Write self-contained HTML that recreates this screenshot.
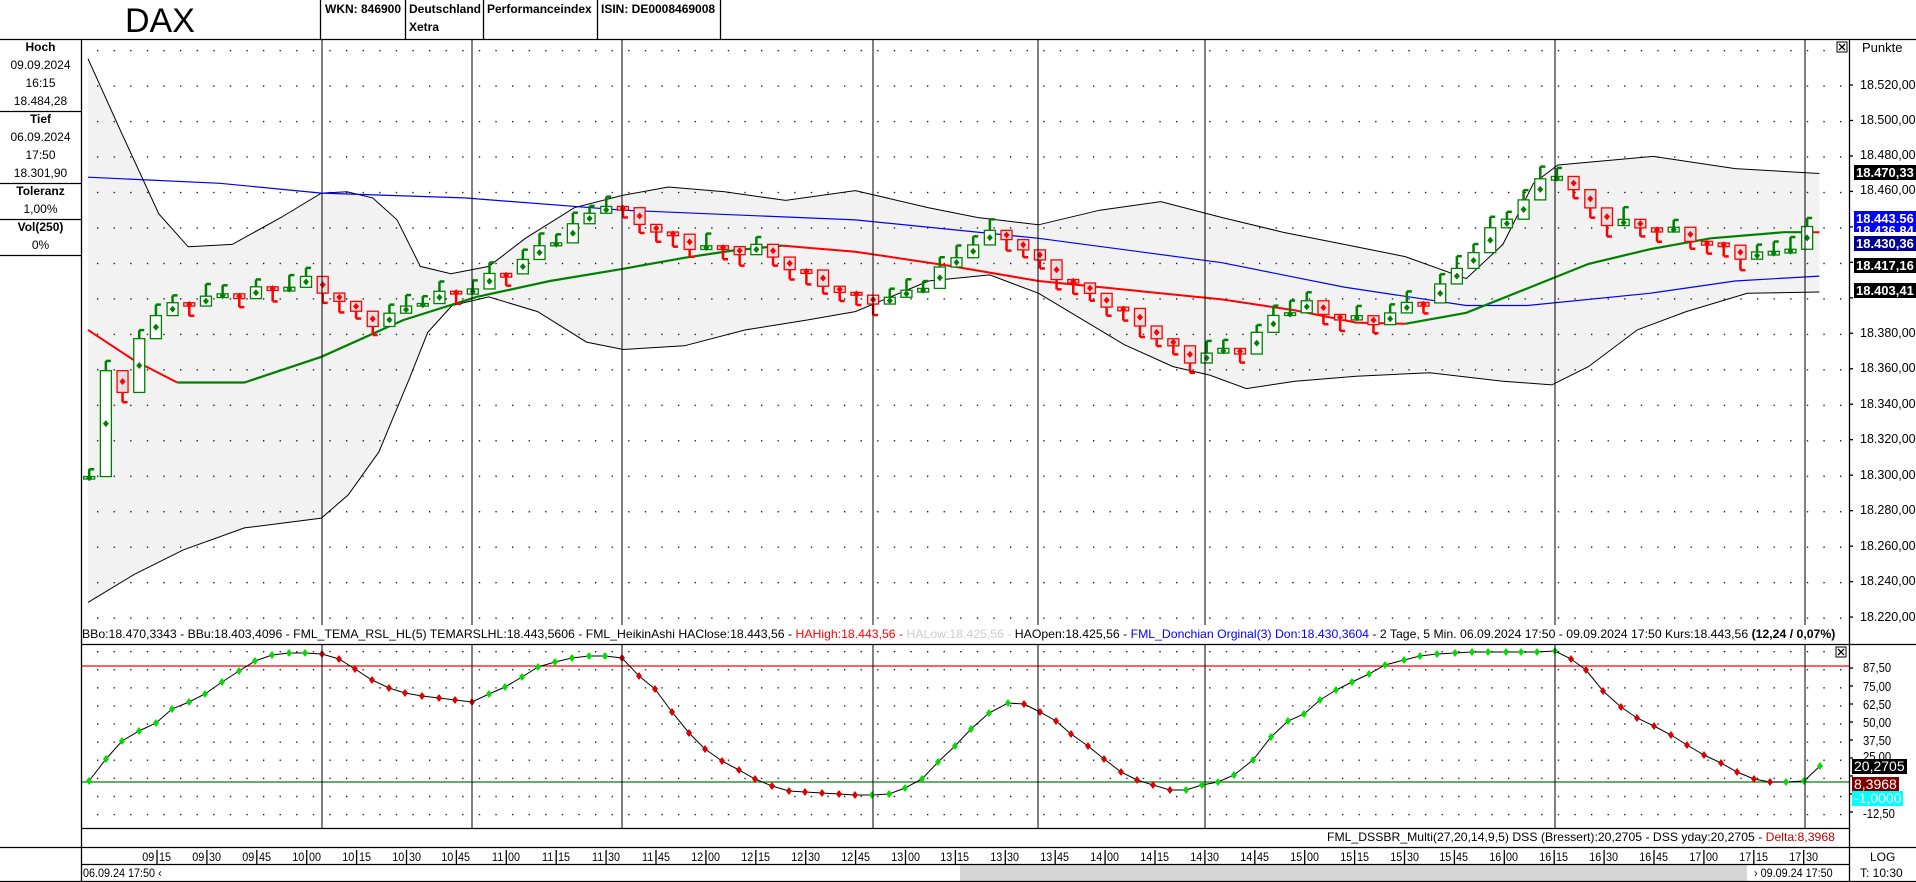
<!DOCTYPE html>
<html><head><meta charset="utf-8"><style>
body{margin:0;width:1916px;height:882px;overflow:hidden;background:#fff;font-family:"Liberation Sans",Arial,sans-serif;position:relative}
.t{position:absolute;white-space:nowrap;font-size:12px;color:#000;line-height:14px}
.c{position:absolute;width:81px;text-align:center;font-size:12px;line-height:14px}
.b{font-weight:bold}
.box{position:absolute;left:1854px;font-size:13px;font-weight:bold;line-height:15px;padding:0 2px;white-space:nowrap}
.ax{position:absolute;left:1860px;font-size:12.5px;line-height:14px}
.ax2{position:absolute;left:1863px;font-size:12.5px;line-height:14px;transform:scaleX(.9);transform-origin:left}
</style></head><body>
<svg id="s" width="1916" height="882" style="position:absolute;left:0;top:0">
<defs>
<pattern id="g1" patternUnits="userSpaceOnUse" x="97" y="14.5" width="16.6" height="35.47"><rect width="1.3" height="1.3" fill="#000"/></pattern>
<pattern id="g2" patternUnits="userSpaceOnUse" x="97" y="651" width="16.6" height="18.1"><rect width="1.3" height="1.3" fill="#000"/></pattern>
</defs>
<g id="main"></g>
</svg>
<div class="t" style="left:125px;top:2px;font-size:34px;line-height:38px">DAX</div>
<div class="t b" style="left:325px;top:2px">WKN: 846900</div>
<div class="t b" style="left:409px;top:2px">Deutschland</div>
<div class="t b" style="left:409px;top:20px">Xetra</div>
<div class="t b" style="left:487px;top:2px">Performanceindex</div>
<div class="t b" style="left:601px;top:2px">ISIN: DE0008469008</div>

<div class="c b" style="left:0;top:40px">Hoch</div>
<div class="c" style="left:0;top:58px">09.09.2024</div>
<div class="c" style="left:0;top:76px">16:15</div>
<div class="c" style="left:0;top:94px">18.484,28</div>
<div class="c b" style="left:0;top:112px">Tief</div>
<div class="c" style="left:0;top:130px">06.09.2024</div>
<div class="c" style="left:0;top:148px">17:50</div>
<div class="c" style="left:0;top:166px">18.301,90</div>
<div class="c b" style="left:0;top:184px">Toleranz</div>
<div class="c" style="left:0;top:202px">1,00%</div>
<div class="c b" style="left:0;top:220px">Vol(250)</div>
<div class="c" style="left:0;top:238px">0%</div>

<div class="t" style="left:1862px;top:41px;font-size:13px">Punkte</div>
<div class="ax" style="top:78px">18.520,00</div>
<div class="ax" style="top:113px">18.500,00</div>
<div class="ax" style="top:148px">18.480,00</div>
<div class="ax" style="top:183px">18.460,00</div>
<div class="ax" style="top:326px">18.380,00</div>
<div class="ax" style="top:361px">18.360,00</div>
<div class="ax" style="top:397px">18.340,00</div>
<div class="ax" style="top:432px">18.320,00</div>
<div class="ax" style="top:468px">18.300,00</div>
<div class="ax" style="top:503px">18.280,00</div>
<div class="ax" style="top:539px">18.260,00</div>
<div class="ax" style="top:574px">18.240,00</div>
<div class="ax" style="top:610px">18.220,00</div>
<div class="box" style="top:165px;background:#000;color:#fff">18.470,33</div>
<div class="box" style="top:211px;background:#0000ff;color:#fff">18.443,56</div>
<div class="box" style="top:223px;background:#0000ff;color:#fff;height:9px;overflow:hidden">18.436,84</div>
<div class="box" style="top:236px;background:#000090;color:#fff">18.430,36</div>
<div class="box" style="top:258px;background:#000;color:#fff">18.417,16</div>
<div class="box" style="top:283px;background:#000;color:#fff">18.403,41</div>

<div class="ax2" style="top:661px">87,50</div>
<div class="ax2" style="top:680px">75,00</div>
<div class="ax2" style="top:698px">62,50</div>
<div class="ax2" style="top:716px">50,00</div>
<div class="ax2" style="top:734px">37,50</div>
<div class="ax2" style="top:750px">25,00</div>
<div class="ax2" style="top:807px">-12,50</div>
<div class="box" style="left:1852px;top:759px;background:#000;color:#fff;font-weight:normal;font-size:14px">20,2705</div>
<div class="box" style="left:1852px;top:777px;background:#800000;color:#fff;font-weight:normal;font-size:14px">8,3968</div>
<div class="box" style="left:1852px;top:791px;background:#00ffff;color:#fff;font-weight:normal;font-size:14px">-1,0000</div>

<div id="leg" class="t" style="left:82px;top:627px;transform-origin:left">BBo:18.470,3343 - BBu:18.403,4096 - FML_TEMA_RSL_HL(5) TEMARSLHL:18.443,5606 - FML_HeikinAshi HAClose:18.443,56 - <span style="color:#f00">HAHigh:18.443,56 - </span><span style="color:#ccc">HALow:18.425,56 - </span>HAOpen:18.425,56 - <span style="color:#00f">FML_Donchian Orginal(3) Don:18.430,3604</span> - 2 Tage, 5 Min. 06.09.2024 17:50 - 09.09.2024 17:50 Kurs:18.443,56 <b>(12,24 / 0,07%)</b></div>
<div id="leg2" class="t" style="left:1327px;top:830px;transform-origin:left">FML_DSSBR_Multi(27,20,14,9,5) DSS (Bressert):20,2705 - DSS yday:20,2705 - <span style="color:#c00000">Delta:8,3968</span></div>
<div id="times"></div>
<div class="t" style="left:83px;top:866px;transform:scaleX(.9);transform-origin:left">06.09.24 17:50 &#8249;</div>
<div class="t" style="left:1754px;top:866px;transform:scaleX(.9);transform-origin:left">&#8250; 09.09.24 17:50</div>
<div class="t" style="left:1870px;top:850px">LOG</div>
<div class="t" style="left:1860px;top:866px">T: 10:30</div>

<script>
(function(){
var NS="http://www.w3.org/2000/svg",G=document.getElementById("main"),S=1.2219;
function el(t,a){var e=document.createElementNS(NS,t);for(var k in a)e.setAttribute(k,a[k]);G.appendChild(e);return e}
function sc(p){return p.map(function(q){return [q[0]*S,q[1]*S]})}
function pl(p){return p.map(function(q){return q[0].toFixed(1)+","+q[1].toFixed(1)}).join(" ")}
function interp(p,x){if(x<=p[0][0])return p[0][1];for(var i=1;i<p.length;i++){if(x<=p[i][0]){var t=(x-p[i-1][0])/(p[i][0]-p[i-1][0]);return p[i-1][1]+t*(p[i][1]-p[i-1][1])}}return p[p.length-1][1]}
el("rect",{x:960,y:865,width:787,height:16,fill:"#d6d6d6"});
var up=sc([[72,48],[100,110],[130,175],[154,202],[190,200],[230,178],[263,158],[284,157],[305,162],[325,180],[344,218],[369,224],[400,218],[430,195],[470,170],[509,160],[547,153],[593,157],[643,164],[700,156],[760,170],[800,178],[850,184],[900,172],[950,165],[1000,178],[1050,190],[1100,200],[1150,210],[1200,228],[1230,200],[1255,150],[1275,135],[1353,128],[1420,138],[1489,142]]);
var lo=sc([[72,493],[110,470],[150,450],[200,432],[240,427],[263,424],[285,405],[310,370],[335,310],[350,272],[370,250],[400,243],[440,255],[480,280],[510,286],[560,283],[610,270],[660,262],[700,255],[760,230],[810,225],[850,240],[880,258],[920,282],[960,300],[990,307],[1020,318],[1060,312],[1110,308],[1170,305],[1230,312],[1270,315],[1300,300],[1340,270],[1380,255],[1430,240],[1489,239]]);
el("polygon",{points:pl(up.concat(lo.slice().reverse())),fill:"#f2f2f2"});
el("rect",{x:82,y:40,width:1767,height:585,fill:"url(#g1)"});
el("rect",{x:82,y:645,width:1767,height:182,fill:"url(#g2)"});
el("polyline",{points:pl(up),fill:"none",stroke:"#000","stroke-width":1});
el("polyline",{points:pl(lo),fill:"none",stroke:"#000","stroke-width":1});
el("polyline",{points:pl(sc([[72,145],[180,150],[263,158],[380,162],[510,172],[700,180],[850,195],[1000,215],[1100,235],[1200,250],[1250,250],[1350,240],[1420,230],[1489,226]])),fill:"none",stroke:"#0000ff","stroke-width":1.2});
el("polyline",{points:pl(sc([[72,270],[110,295],[145,313]])),fill:"none",stroke:"#ff0000","stroke-width":2});
el("polyline",{points:pl(sc([[145,313],[200,313],[263,292],[330,262],[390,243],[450,230],[510,220],[560,211],[600,205],[640,201]])),fill:"none",stroke:"#008000","stroke-width":2.2});
el("polyline",{points:pl(sc([[640,201],[700,206],[780,218],[850,230],[930,238],[1000,245],[1060,254],[1110,264],[1150,265]])),fill:"none",stroke:"#ff0000","stroke-width":2});
el("polyline",{points:pl(sc([[1150,265],[1200,256],[1250,236],[1300,216],[1350,204],[1400,195],[1460,190],[1475,190]])),fill:"none",stroke:"#008000","stroke-width":2.2});
el("polyline",{points:pl(sc([[1475,190],[1489,190]])),fill:"none",stroke:"#ff0000","stroke-width":2});
var kp=[[75,390],[88,290],[102,330],[115,270],[130,255],[160,245],[200,240],[250,230],[270,240],[300,265],[320,258],[345,245],[380,238],[420,218],[470,185],[495,165],[520,180],[560,200],[600,205],[620,203],[650,220],[700,245],[730,245],[760,230],[800,195],[820,190],[850,215],[880,235],[910,250],[940,270],[970,295],[985,290],[1020,285],[1045,255],[1070,250],[1100,262],[1130,262],[1150,250],[1175,240],[1200,210],[1230,180],[1260,150],[1275,140],[1290,160],[1310,180],[1340,185],[1370,190],[1400,200],[1430,210],[1460,205],[1490,180]];
var prev=392;
for(var i=0;i<104;i++){var x=73+i*13.65;var c=interp(kp,x)+Math.sin(i*2.3)*4;var o=prev;prev=c;
var upc=c<o,col=upc?"#008000":"#ff0000";var tp=Math.min(o,c),bt=Math.max(o,c);if(bt-tp<2){bt=tp+3}
var X=x*S,w=11;var hi=tp-6-(i*7%5),lw=bt+6+(i*5%4);
if(upc){el("line",{x1:X,y1:hi*S,x2:X,y2:tp*S,stroke:col,"stroke-width":2.5});el("line",{x1:X,y1:hi*S,x2:X+5,y2:hi*S,stroke:col,"stroke-width":2.5});}
else{el("line",{x1:X,y1:bt*S,x2:X,y2:lw*S,stroke:col,"stroke-width":2.5});el("line",{x1:X,y1:lw*S,x2:X+5,y2:lw*S,stroke:col,"stroke-width":2.5});}
el("rect",{x:X-w/2,y:tp*S,width:w,height:(bt-tp)*S,fill:upc?"#fff":"#e0e0e0",stroke:col,"stroke-width":1.3});
var m=((tp+bt)/2)*S;el("polygon",{points:(X-3)+","+m+" "+X+","+(m-3.5)+" "+(X+3)+","+m+" "+X+","+(m+3.5),fill:col});}
el("line",{x1:82,y1:666,x2:1849,y2:666,stroke:"#ff0000","stroke-width":1.3});
el("line",{x1:82,y1:782,x2:1849,y2:782,stroke:"#008000","stroke-width":1.3});
var os=[[89,781],[106,759],[122,741],[139,731],[156,723],[172,709],[189,702],[205,694],[222,682],[239,671],[255,661],[272,655],[289,653],[305,653],[322,654],[339,659],[355,669],[372,680],[389,688],[405,693],[422,696],[439,698],[455,700],[472,702],[489,694],[505,687],[522,677],[538,667],[555,662],[572,658],[589,656],[605,656],[622,658],[639,676],[655,689],[672,712],[689,733],[705,749],[722,761],[739,770],[755,779],[772,786],[789,791],[805,792],[822,793],[839,794],[855,795],[872,795],[889,794],[905,788],[922,779],[938,762],[955,746],[971,729],[989,713],[1008,703],[1024,704],[1040,712],[1056,721],[1071,734],[1088,746],[1104,759],[1121,772],[1137,780],[1153,785],[1170,790],[1186,790],[1202,785],[1218,782],[1234,775],[1253,760],[1271,737],[1288,721],[1304,714],[1320,700],[1336,690],[1352,682],[1369,674],[1385,665],[1404,660],[1420,656],[1437,654],[1455,653],[1472,652],[1488,652],[1506,652],[1521,652],[1537,652],[1555,651],[1571,659],[1586,670],[1603,691],[1621,707],[1637,718],[1654,726],[1671,735],[1687,745],[1704,755],[1721,763],[1737,772],[1754,779],[1770,782],[1786,782],[1804,781],[1820,766]];
el("polyline",{points:pl(os),fill:"none",stroke:"#000","stroke-width":1});
for(var j=0;j<os.length;j++){var p=os[j],q=os[j-1]||[0,800];var cl=p[1]<=q[1]?"#00dd00":"#dd0000";el("polygon",{points:(p[0]-3)+","+p[1]+" "+p[0]+","+(p[1]-4)+" "+(p[0]+3)+","+p[1]+" "+p[0]+","+(p[1]+4),fill:cl});}
[322,472,622,873,1038,1205,1555,1805].forEach(function(x){el("line",{x1:x,y1:40,x2:x,y2:625,stroke:"#000","stroke-width":1});el("line",{x1:x,y1:644,x2:x,y2:828,stroke:"#000","stroke-width":1});});
function L(a,b,c,d){el("line",{x1:a,y1:b,x2:c,y2:d,stroke:"#000","stroke-width":1.3})}
L(0,39.5,1916,39.5);L(81.5,39,81.5,882);L(1849.5,39,1849.5,882);
[111,183,219,255].forEach(function(y){L(0,y+.5,81,y+.5)});
L(81,644.5,1916,644.5);L(81,828.5,1849,828.5);L(0,847.5,1916,847.5);L(81,864.5,1849,864.5);L(0,881.5,1916,881.5);
[320,405,483,597,720].forEach(function(x){L(x+.5,0,x+.5,39)});
[[1837,42],[1836,647]].forEach(function(b){el("rect",{x:b[0],y:b[1],width:10,height:10,fill:"#fff",stroke:"#000"});el("path",{d:"M"+(b[0]+2)+" "+(b[1]+2)+"L"+(b[0]+8)+" "+(b[1]+8)+"M"+(b[0]+8)+" "+(b[1]+2)+"L"+(b[0]+2)+" "+(b[1]+8),stroke:"#000","stroke-width":1.3});});
for(var k=0;k<16;k++){var y=85+k*35.47;L(1849,y,1853,y)}
for(var k=0;k<9;k++){var y=668+k*18;L(1849,y,1853,y)}
var tm=document.getElementById("times"),h="";
for(var i=0;i<34;i++){var mins=9*60+15+i*15,hh=Math.floor(mins/60),mm=mins%60;var x=157+i*49.9;
L(x,850,x,864);
h+='<div class="t" style="left:'+(x-17)+'px;top:850px;width:15px;text-align:right;transform:scaleX(.9)">'+(hh<10?"0":"")+hh+'</div><div class="t" style="left:'+(x+2)+'px;top:850px;transform:scaleX(.9);transform-origin:left">'+(mm<10?"0":"")+mm+'</div>';}
tm.innerHTML=h;
function fit(id,w){var e=document.getElementById(id);e.style.transform="scaleX("+(w/e.scrollWidth)+")";}
fit("leg",1753);fit("leg2",508);
})();
</script>
</body></html>
